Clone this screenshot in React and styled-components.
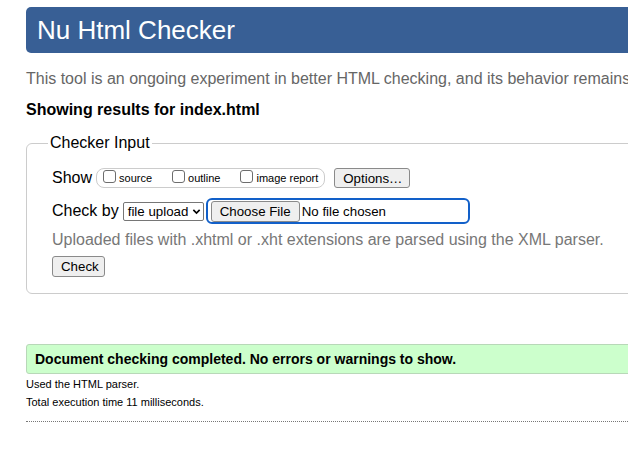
import React from "react";
import styled, { createGlobalStyle } from "styled-components";

const GlobalStyle = createGlobalStyle`
  html, body { margin: 0; padding: 0; background: #fff; overflow: hidden; }
  body { font-family: "Liberation Sans", Arial, sans-serif; color: #000; }
  * { box-sizing: border-box; }
`;

const Page = styled.div`
  width: 760px;
  padding: 7px 0 0 26px;
`;

const Title = styled.h1`
  margin: 0;
  height: 46px;
  display: flex;
  align-items: center;
  padding-left: 11px;
  background: #385f95;
  color: #fff;
  font-size: 26px;
  font-weight: normal;
  border-radius: 5px;
`;

const Intro = styled.p`
  margin: 17px 0 0;
  font-size: 16px;
  line-height: 18px;
  color: #666;
  white-space: nowrap;
`;

const Showing = styled.p`
  margin: 13px 0 0;
  font-size: 16px;
  line-height: 18px;
  font-weight: bold;
`;

const Fieldset = styled.fieldset`
  margin: 15px 0 0;
  padding: 13px 0 16px 25px;
  border: 1px solid #ccc;
  border-radius: 6px;
  min-width: 0;
`;

const Legend = styled.legend`
  margin-left: -4px;
  padding: 0 2px;
  font-size: 16px;
  line-height: 18px;
`;

const Row = styled.div`
  display: flex;
  align-items: center;
  height: ${(p) => p.$h || 26}px;
  margin-top: ${(p) => p.$mt || 0}px;
`;

const Label = styled.span`
  font-size: 16px;
  margin-right: ${(p) => p.$mr || 4}px;
`;

const Group = styled.div`
  display: flex;
  align-items: center;
  height: 20px;
  padding: 0 6px 0 6px;
  border: 1px solid #ccc;
  border-radius: 8px;
  margin-right: 9px;
`;

const CheckItem = styled.label`
  display: flex;
  align-items: center;
  font-size: 11px;
  margin-right: ${(p) => p.$mr || 0}px;
`;

const Box = styled.span`
  width: 13px;
  height: 13px;
  border: 1px solid #6d6d6d;
  border-radius: 3px;
  background: #fff;
  margin-right: 3px;
  margin-top: -3px;
`;

const Button = styled.button`
  font-family: "Liberation Sans", Arial, sans-serif;
  font-size: 13.3px;
  height: ${(p) => p.$h || 20}px;
  padding: 0 ${(p) => p.$px || 8}px;
  border: 1px solid #8a8a8a;
  border-radius: 3px;
  background: #efefef;
  color: #000;
  width: ${(p) => (p.$w ? p.$w + "px" : "auto")};
`;

const Select = styled.div`
  display: flex;
  align-items: center;
  justify-content: space-between;
  width: 81px;
  height: 19px;
  padding: 0 2px 0 4px;
  border: 1px solid #767676;
  border-radius: 2px;
  font-size: 13.3px;
  margin-right: 2px;
`;

const FileFocus = styled.div`
  display: flex;
  align-items: center;
  width: 264px;
  height: 26px;
  padding-left: 3px;
  border: 2px solid #1260c9;
  border-radius: 6px;
  font-size: 13.3px;
  gap: 2px;
`;

const Hint = styled.p`
  margin: 6px 0 0;
  font-size: 16px;
  line-height: 18px;
  color: #777;
  white-space: nowrap;
`;

const Success = styled.div`
  margin-top: 50px;
  height: 30px;
  display: flex;
  align-items: center;
  padding-left: 8px;
  background: #ccffcc;
  border: 1px solid #b8d8b8;
  border-radius: 3px 0 0 3px;
  font-size: 14px;
  font-weight: bold;
`;

const Info = styled.p`
  margin: ${(p) => p.$mt || 0}px 0 0;
  font-size: 11px;
  line-height: 14px;
`;

const Dotted = styled.hr`
  margin: 12px 0 0;
  border: 0;
  border-top: 1px dotted #777;
`;

const Chevron = () => (
  <svg width="9" height="9" viewBox="0 0 10 10">
    <path d="M1.5 3.2 L5 6.8 L8.5 3.2" fill="none" stroke="#000" strokeWidth="1.8" />
  </svg>
);

export default function App() {
  return (
    <>
      <GlobalStyle />
      <Page>
        <Title>Nu Html Checker</Title>
        <Intro>
          This tool is an ongoing experiment in better HTML checking, and its behavior remains
        </Intro>
        <Showing>Showing results for index.html</Showing>
        <Fieldset>
          <Legend>Checker Input</Legend>
          <Row $h={26}>
            <Label>Show</Label>
            <Group>
              <CheckItem $mr={20}>
                <Box />
                source
              </CheckItem>
              <CheckItem $mr={20}>
                <Box />
                outline
              </CheckItem>
              <CheckItem>
                <Box />
                image report
              </CheckItem>
            </Group>
            <Button $w={76}>Options…</Button>
          </Row>
          <Row $h={28} $mt={6}>
            <Label $mr={4}>Check by</Label>
            <Select>
              file upload
              <Chevron />
            </Select>
            <FileFocus>
              <Button $w={89} $h={21} $px={6}>Choose File</Button>
              No file chosen
            </FileFocus>
          </Row>
          <Hint>Uploaded files with .xhtml or .xht extensions are parsed using the XML parser.</Hint>
          <Row $h={21} $mt={7}>
            <Button $w={53} $h={21}>Check</Button>
          </Row>
        </Fieldset>
        <Success>Document checking completed. No errors or warnings to show.</Success>
        <Info $mt={3}>Used the HTML parser.</Info>
        <Info $mt={4}>Total execution time 11 milliseconds.</Info>
        <Dotted />
      </Page>
    </>
  );
}
